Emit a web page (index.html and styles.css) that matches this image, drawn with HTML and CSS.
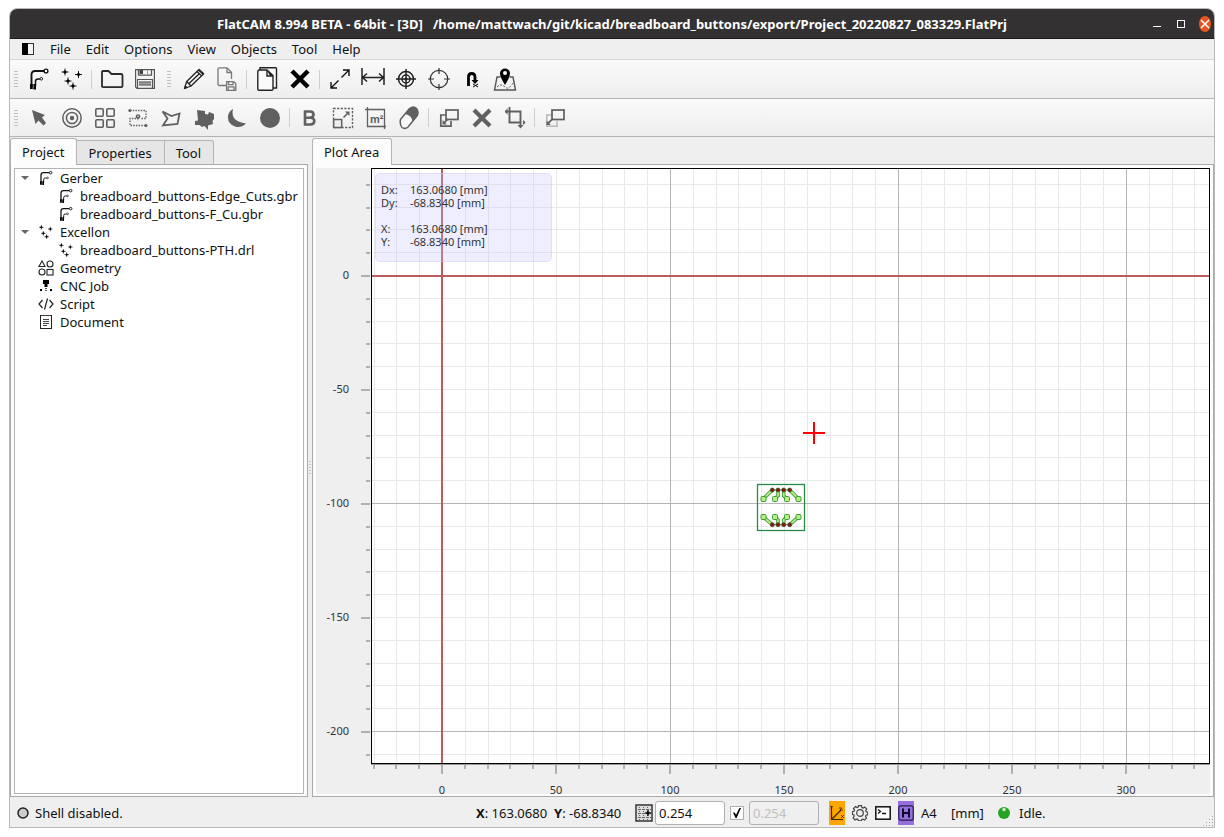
FILE: index.html
```html
<!DOCTYPE html>
<html lang="en">
<head>
<meta charset="utf-8">
<title>FlatCAM 8.994 BETA</title>
<link rel="stylesheet" href="styles.css">
</head>
<body>
<svg class="defs" aria-hidden="true">
  <symbol id="i-gerber" viewBox="0 0 24 24">
    <path d="M4.500 19V7.500Q4.500 4 8 4H17" fill="none" stroke="#111" stroke-width="1.900"/>
    <path d="M8.500 19V14.500Q8.500 12 11 12H13" fill="none" stroke="#111" stroke-width="1.500"/>
    <circle cx="19" cy="4" r="1.900" fill="#fff" stroke="#111" stroke-width="1.400"/>
    <circle cx="14.300" cy="11.800" r="1.300" fill="#fff" stroke="#111"/>
    <path d="M3 17h2.800v5H3zM6.400 17h2.600v5.500H6.400z" fill="#000"/>
  </symbol>
  <symbol id="i-drill" viewBox="0 0 24 24">
    <path d="M5 1.500v7M1.500 5h7M18.500 4v7M15 7.500h7M8 10.500v7M4.500 14h7M13 15.500v7M9.500 19h7" stroke="#222" fill="none"/>
    <path d="M5 3l2 2-2 2-2-2zM18.500 5.500l2 2-2 2-2-2zM8 12l2 2-2 2-2-2zM13 17l2 2-2 2-2-2z" fill="#000"/>
  </symbol>
</svg>

<div class="window">
  <header class="titlebar">
    <h1 class="title">FlatCAM 8.994 BETA - 64bit - [3D] &nbsp; /home/mattwach/git/kicad/breadboard_buttons/export/Project_20220827_083329.FlatPrj</h1>
    <div class="window-buttons">
      <button class="wbtn" aria-label="Minimize"><svg width="12" height="12"><path d="M2 8.500h8" stroke="#fff" fill="none"/></svg></button>
      <button class="wbtn" aria-label="Maximize"><svg width="12" height="12"><rect x="2.500" y="2.500" width="7" height="7" stroke="#fff" fill="none"/></svg></button>
      <button class="wbtn" aria-label="Close"><svg width="12" height="16"><ellipse cx="6" cy="8" rx="6" ry="8" fill="#e95420"/><path d="M2 4l8 8M10 4l-8 8" stroke="#fff" stroke-width="1.500"/></svg></button>
    </div>
  </header>

  <nav class="menubar" aria-label="Main menu">
    <button class="menu menu-toggle" aria-label="Toggle panel"><svg width="12" height="12"><rect x=".5" y=".5" width="11" height="11" fill="#f4f4f4" stroke="#333"/><rect width="6" height="12" fill="#000"/></svg></button>
    <button class="menu">File</button>
    <button class="menu">Edit</button>
    <button class="menu">Options</button>
    <button class="menu">View</button>
    <button class="menu">Objects</button>
    <button class="menu">Tool</button>
    <button class="menu">Help</button>
  </nav>

  <div class="toolbar toolbar-main" role="toolbar" aria-label="File and view">
    <span class="grip"></span>
    <button class="tool" aria-label="Open Gerber"><svg class="icon"><use href="#i-gerber"/></svg></button>
    <button class="tool" aria-label="Open Excellon"><svg class="icon"><use href="#i-drill"/></svg></button>
    <span class="sep"></span>
    <button class="tool" aria-label="Open project"><svg class="icon" viewBox="0 0 24 24"><path d="M2 20V5q0-1 1-1h5.500l3 3H21q1.500 0 1.500 1.500V19q0 1.200-1.200 1.200H3.200Q2 20.200 2 19z" fill="none" stroke="#2a2a2a" stroke-width="1.800"/></svg></button>
    <button class="tool" aria-label="Save project"><svg class="icon" viewBox="0 0 24 24"><g fill="none" stroke="#555" stroke-width="1.200"><path d="M2.600 2.600h18.800v18.800H4l-1.400-1.400z"/><path d="M5.500 2.600v5.500h13V2.600M4.500 21v-8.500h15V21"/></g><path d="M6 14.500h12v4H6z" fill="#999"/><path d="M6 15h12M6 18h12" stroke="#666"/><path d="M6.500 3h3.500v4H6.500z" fill="#444"/><path d="M14.500 3.500v3.500" stroke="#999"/></svg></button>
    <span class="grip"></span>
    <button class="tool" aria-label="Edit object"><svg class="icon" viewBox="0 0 24 24"><g fill="none" stroke="#222" stroke-width="1.300" stroke-linejoin="round"><path d="M2.500 21.500l2.200-7L17 2.500l4.700 4.200L9 19z"/><path d="M4.700 14.500L9 19M15 4.500l4.700 4.400M7 16.500L17.500 6.500"/></g><path d="M2 22l1.200-4 2.800 2.800zM17 2.500l4.700 4.200-1 1L16 3.500z" fill="#222"/></svg></button>
    <button class="tool" aria-label="Save object"><svg class="icon" viewBox="0 0 24 24"><g fill="none" stroke="#777" stroke-width="1.300"><path d="M11 18.500H4.500Q3 18.500 3 17V2q0-1.200 1.200-1.200H12l4.500 4.500V12"/><path d="M12 1v4.500h4.500M11.600 14.600h7l2.200 2v6.800h-9.200z"/><path d="M13.500 14.600v3h4.500v-3M13.200 23v-3.200h5.800V23"/></g></svg></button>
    <span class="sep"></span>
    <button class="tool" aria-label="Copy"><svg class="icon" viewBox="0 0 24 24"><g fill="#fafafa" stroke="#222" stroke-width="1.400"><path d="M5 3V.8h15.500q1 0 1 1V21H18z"/><path d="M2.800 4.500Q2.800 3 4.300 3H12l6 5.500V22q0 1.200-1.200 1.200H4Q2.800 23.200 2.800 22z"/><path d="M12 3v6h6" fill="none"/></g><path d="M12 3l6 6h-3z" fill="#222"/></svg></button>
    <button class="tool" aria-label="Delete"><svg class="icon" viewBox="0 0 24 24"><path d="M4 4l16 16M20 4L4 20" stroke="#000" stroke-width="4.500"/></svg></button>
    <span class="sep"></span>
    <button class="tool" aria-label="Zoom fit"><svg class="icon" viewBox="0 0 24 24"><g fill="none" stroke="#111" stroke-width="1.400"><path d="M13.500 10.500l7.500-7.500M15 3h6v6M10.500 13.500L3 21M3 15v6h6"/></g></svg></button>
    <button class="tool" aria-label="Distance"><svg class="icon" viewBox="0 0 24 24"><path d="M1 1v17M23 1v17M2 10.500h20M6 6.500l-4.500 4 4.500 4M18 6.500l4.500 4-4.500 4" fill="none" stroke="#222" stroke-width="1.500"/></svg></button>
    <button class="tool" aria-label="Minimum distance"><svg class="icon" viewBox="0 0 24 24"><g fill="none" stroke="#222" stroke-width="1.500"><circle cx="12" cy="12" r="7.500"/><circle cx="12" cy="12" r="4"/><path d="M12 2v20M2 12h20"/></g><circle cx="12" cy="12" r="1.600" fill="#222"/></svg></button>
    <button class="tool" aria-label="Set origin"><svg class="icon" viewBox="0 0 24 24"><g fill="none" stroke="#333" stroke-width="1.200"><circle cx="12" cy="12" r="8.700"/><path d="M12 1v6M12 17v6M1 12h6M17 12h6"/></g></svg></button>
    <button class="tool" aria-label="Move to origin"><svg class="icon" viewBox="0 0 24 24"><path d="M8.500 19V10q0-3.500 3.200-3.500T15 10v5" fill="none" stroke="#000" stroke-width="2.800"/><path d="M11.500 13h7L15 17z" fill="#000"/><path d="M13 17l5 3M18 17l-5 3" stroke="#000"/></svg></button>
    <button class="tool" aria-label="Jump to location"><svg class="icon" viewBox="0 0 24 24"><path d="M7.500 10H4L1.500 23h21L20 10h-3.500" fill="none" stroke="#555" stroke-width="1.400"/><path d="M4 20q4-4 8 0t9-6" fill="none" stroke="#555" stroke-dasharray="2 1.500"/><path d="M12 18Q7 10 7 6.500a5 5 0 0 1 10 0Q17 10 12 18z" fill="#000"/><circle cx="12" cy="6" r="2" fill="#fff"/></svg></button>
  </div>

  <div class="toolbar" role="toolbar" aria-label="Gerber editor">
    <span class="grip"></span>
    <button class="tool" aria-label="Select"><svg class="icon" viewBox="0 0 24 24"><path d="M5 4l13 5-3 2.500L19 17l-2.500 2.500-5-5L8.500 18z" fill="#606060"/></svg></button>
    <button class="tool" aria-label="Add pad"><svg class="icon" viewBox="0 0 24 24"><g fill="none" stroke="#606060" stroke-width="1.500"><circle cx="12" cy="12" r="9.200"/><circle cx="12" cy="12" r="5.600"/></g><circle cx="12" cy="12" r="2.200" fill="#606060"/></svg></button>
    <button class="tool" aria-label="Pad array"><svg class="icon" viewBox="0 0 24 24"><g fill="none" stroke="#606060" stroke-width="1.600"><rect x="2.800" y="2.800" width="7.400" height="7.400" rx="1"/><rect x="13.800" y="2.800" width="7.400" height="7.400" rx="1"/><rect x="2.800" y="13.800" width="7.400" height="7.400" rx="1"/><rect x="13.800" y="13.800" width="7.400" height="7.400" rx="1"/></g></svg></button>
    <button class="tool" aria-label="Add track"><svg class="icon" viewBox="0 0 24 24"><path d="M4 4.500h16v8h-5M10 12.500H4v7h16" fill="none" stroke="#606060" stroke-width="1.300" stroke-dasharray="1.500 1.200"/><circle cx="3.800" cy="4.500" r="1.500" fill="#606060"/><circle cx="20" cy="19.500" r="1.500" fill="#606060"/><circle cx="12" cy="10.500" r="2.300" fill="#606060"/><circle cx="12" cy="10.300" r=".8" fill="#eee"/><path d="M11 11h2l-1 4z" fill="#606060"/></svg></button>
    <button class="tool" aria-label="Add region"><svg class="icon" viewBox="0 0 24 24"><path d="M3.500 5.500l9 4.500 8-2.500-2 10.500-14.500 1.500 4.500-7z" fill="none" stroke="#606060" stroke-width="1.800"/></svg></button>
    <button class="tool" aria-label="Poligonize"><svg class="icon" viewBox="0 0 24 24"><path d="M5 4l8 1v3l3 .5L17 6l5 2v5l-1.500 2 .5 3-5 1.500V24l-3.500-4-2.500 1-2.500-2H3v-4l3-.5z" fill="#606060"/></svg></button>
    <button class="tool" aria-label="Semidisc"><svg class="icon" viewBox="0 0 24 24"><path d="M8 3Q5 15.500 21 17.500 16 22.500 10 20.500 3 18 3 11.500 3 5.500 8 3z" fill="#606060"/></svg></button>
    <button class="tool" aria-label="Disc"><svg class="icon" viewBox="0 0 24 24"><circle cx="12" cy="12" r="10" fill="#606060"/></svg></button>
    <span class="sep"></span>
    <button class="tool" aria-label="Buffer"><svg class="icon" viewBox="0 0 24 24"><path d="M7 5.500h5q3.500 0 3.500 3t-3.500 3.200H7zM7 11.700h5.500q3.800 0 3.800 3.400t-3.800 3.400H7z" fill="none" stroke="#606060" stroke-width="2.600"/></svg></button>
    <button class="tool" aria-label="Scale"><svg class="icon" viewBox="0 0 24 24"><rect x="2.500" y="2.500" width="19" height="19" fill="none" stroke="#606060" stroke-width="1.400" stroke-dasharray="2.200 1.400"/><rect x="2.700" y="13.500" width="8" height="8" fill="#eee" stroke="#606060" stroke-width="1.500"/><path d="M12.500 11.500L17 7" stroke="#606060" stroke-width="1.600"/><path d="M14 5.500h4.500V10z" fill="#606060"/></svg></button>
    <button class="tool" aria-label="Mark area"><svg class="icon" viewBox="0 0 24 24"><path d="M3.500 1v19.500H22M1 3.500h19.500V23" fill="none" stroke="#606060" stroke-width="1.300"/><text x="6" y="17" class="area-m">m²</text></svg></button>
    <button class="tool" aria-label="Eraser"><svg class="icon" viewBox="0 0 24 24"><path d="M3.500 13.500L12.500 2.500q4-3 7 0 2.500 3 .8 7L11 21q-3 2.500-6 .5-2.500-3-1.500-8z" fill="#fafafa" stroke="#606060" stroke-width="1.500"/><path d="M8 8l4.500-5.500q4-3 7 0 2.500 3 .8 7L15.500 16Q15 9 8 8z" fill="#606060"/></svg></button>
    <span class="sep"></span>
    <button class="tool" aria-label="Copy shape"><svg class="icon" viewBox="0 0 24 24"><g fill="none" stroke="#606060" stroke-width="1.700"><path d="M9 9H3.800v11.200H14V15"/><rect x="9" y="4" width="12" height="9.500"/></g><path d="M5.500 18.500V14l1.500 1.500 3.500-3 1 1-3.200 3.500 1.700 1.500z" fill="#606060"/></svg></button>
    <button class="tool" aria-label="Delete shape"><svg class="icon" viewBox="0 0 24 24"><path d="M4 4l16 16M20 4L4 20" stroke="#606060" stroke-width="4.200"/></svg></button>
    <button class="tool" aria-label="Transformations"><svg class="icon" viewBox="0 0 24 24"><path d="M6.500 2v14.500h12M2 5.500h15.500v15M6.500 1v3M20 16.500h2" fill="none" stroke="#606060" stroke-width="1.900"/><path d="M4.500 2L2 5.500 4.500 9zM14.500 19h6l-3 3.500zM20 14v5l2.500-2.500z" fill="#606060"/></svg></button>
    <span class="sep"></span>
    <button class="tool" aria-label="Move shape"><svg class="icon" viewBox="0 0 24 24"><path d="M9 9H3.800v11.200H14V15" fill="none" stroke="#b8b8b8" stroke-width="1.500"/><rect x="9" y="4" width="12" height="9.500" fill="none" stroke="#606060" stroke-width="1.700"/><path d="M3.500 19v-4.500l1.500 1.500 4.500-4 1 1-4.200 4.500 1.500 1.500z" fill="#606060"/></svg></button>
  </div>

  <main class="workspace">
    <section class="side">
      <div class="tabs" role="tablist">
        <button class="tab active" role="tab" aria-selected="true">Project</button>
        <button class="tab" role="tab" aria-selected="false">Properties</button>
        <button class="tab" role="tab" aria-selected="false">Tool</button>
      </div>
      <div class="pane side-pane">
        <ul class="tree">
          <li class="row"><span class="arrow"></span><svg class="mini"><use href="#i-gerber"/></svg>Gerber</li>
          <li class="row child"><svg class="mini"><use href="#i-gerber"/></svg>breadboard_buttons-Edge_Cuts.gbr</li>
          <li class="row child"><svg class="mini"><use href="#i-gerber"/></svg>breadboard_buttons-F_Cu.gbr</li>
          <li class="row"><span class="arrow"></span><svg class="mini"><use href="#i-drill"/></svg>Excellon</li>
          <li class="row child"><svg class="mini"><use href="#i-drill"/></svg>breadboard_buttons-PTH.drl</li>
          <li class="row"><svg class="mini" viewBox="0 0 16 16"><g fill="none" stroke="#222" stroke-width="1.100"><path d="M4 1L1 6.500h6z"/><circle cx="12" cy="4" r="3"/><circle cx="4" cy="12" r="3"/><rect x="9" y="9.500" width="6" height="5.500"/></g></svg>Geometry</li>
          <li class="row"><svg class="mini" viewBox="0 0 16 16"><path d="M5 2h6v4H9.500v3h-3V6H5zM2 11h2v2H2zM12 11h2v2h-2zM7.300 10h1.400v1H7.300zM7.300 12h1.400v1H7.300z" fill="#000"/></svg>CNC Job</li>
          <li class="row"><svg class="mini" viewBox="0 0 16 16"><path d="M4.500 4L1 8l3.500 4M11.500 4L15 8l-3.500 4M9.500 2.500l-3 11" fill="none" stroke="#222" stroke-width="1.200"/></svg>Script</li>
          <li class="row"><svg class="mini" viewBox="0 0 16 16"><rect x="2.500" y="1.500" width="11" height="13" fill="none" stroke="#222"/><path d="M4 1.500h8M5 5.500h6M5 7.500h6M5 9.500h6M5 11.500h4" stroke="#444" fill="none"/></svg>Document</li>
        </ul>
      </div>
    </section>

    <div class="splitter"></div>

    <section class="main">
      <div class="tabs" role="tablist">
        <button class="tab active" role="tab" aria-selected="true">Plot Area</button>
      </div>
      <div class="pane plot-pane">
        <div class="plot-grid">
          <svg class="axis-y" aria-label="Y axis">
            <defs><pattern id="ty" x="0" y="107" width="55" height="114" patternUnits="userSpaceOnUse"><path d="M45 0h9v2h-9zM50 23h4v2h-4zM50 46h4v2h-4zM50 68h4v2h-4zM50 91h4v2h-4z" fill="#b0b0b0"/></pattern></defs>
            <rect width="55" height="100%" fill="url(#ty)"/>
            <g class="ticks-y"><text x="33" y="111">0</text><text x="33" y="225">-50</text><text x="33" y="339">-100</text><text x="33" y="453">-150</text><text x="33" y="567">-200</text></g>
          </svg>
          <div class="plot">
            <svg class="plot-svg" aria-label="PCB plot">
              <defs>
                <pattern id="minor" x="70" y="106" width="114" height="114" patternUnits="userSpaceOnUse"><path d="M.5 0v114M23.500 0v114M46.500 0v114M68.500 0v114M91.500 0v114M0 .5h114M0 23.500h114M0 46.500h114M0 68.500h114M0 91.500h114" stroke="#e9e9e9" fill="none"/></pattern>
                <pattern id="major" x="70" y="106" width="228" height="228" patternUnits="userSpaceOnUse"><path d="M.5 0v228M0 .5h228" stroke="#b4b4b4" fill="none"/></pattern>
              </defs>
              <rect width="100%" height="100%" fill="url(#minor)"/>
              <rect width="100%" height="100%" fill="url(#major)"/>
              <rect x="69" width="2" height="100%" fill="#b85c5c"/>
              <rect y="106" width="100%" height="2" fill="#b85c5c"/>
              <rect x="385.500" y="315.500" width="47" height="46" fill="none" stroke="#2a8a4c" stroke-width="1.300"/>
              <g fill="none" stroke="#3c9c3c" stroke-width="3.600"><path d="M391.300 329.700l9-8.700M403 329.700l3-3V321M414.700 329.700l-3-3V321M426.300 329.700l-8.600-8.700M391.300 348l9 7.700M403 348l3 3v4.700M414.700 348l-3 3v4.700M426.300 348l-8.600 7.700"/></g>
              <path d="M400.300 321h17.400M400.300 355.700h17.400" stroke="#3c9c3c"/>
              <g fill="none" stroke="#b8ec80" stroke-width="1.800"><path d="M391.300 329.700l9-8.700M403 329.700l3-3V321M414.700 329.700l-3-3V321M426.300 329.700l-8.600-8.700M391.300 348l9 7.700M403 348l3 3v4.700M414.700 348l-3 3v4.700M426.300 348l-8.600 7.700"/></g>
              <g fill="#b8f080" stroke="#3c9c3c"><rect x="389" y="327.500" width="5" height="5" rx="1"/><rect x="400.500" y="327.500" width="5" height="5" rx="1"/><rect x="412.500" y="327.500" width="5" height="5" rx="1"/><rect x="424" y="327.500" width="5" height="5" rx="1"/><rect x="389" y="345.500" width="5" height="5" rx="1"/><rect x="400.500" y="345.500" width="5" height="5" rx="1"/><rect x="412.500" y="345.500" width="5" height="5" rx="1"/><rect x="424" y="345.500" width="5" height="5" rx="1"/></g>
              <g fill="#8c1010" stroke="#3a5c2c" stroke-width=".8"><circle cx="400.300" cy="321" r="2"/><circle cx="406" cy="321" r="2"/><circle cx="411.700" cy="321" r="2"/><circle cx="417.700" cy="321" r="2"/><circle cx="400.300" cy="355.700" r="2"/><circle cx="406" cy="355.700" r="2"/><circle cx="411.700" cy="355.700" r="2"/><circle cx="417.700" cy="355.700" r="2"/></g>
              <path d="M442 253v22M431 264h22" stroke="#f00" stroke-width="2"/>
            </svg>
            <dl class="hud">
              <dt>Dx:</dt><dd>163.0680 [mm]</dd>
              <dt>Dy:</dt><dd>-68.8340 [mm]</dd>
              <dt class="hud-abs">X:</dt><dd class="hud-abs">163.0680 [mm]</dd>
              <dt>Y:</dt><dd>-68.8340 [mm]</dd>
            </dl>
          </div>
          <svg class="axis-x" aria-label="X axis">
            <defs><pattern id="tx" x="70" y="0" width="114" height="30" patternUnits="userSpaceOnUse"><path d="M0 1h2v9H0zM23 1h2v4h-2zM46 1h2v4h-2zM68 1h2v4h-2zM91 1h2v4h-2z" fill="#b0b0b0"/></pattern></defs>
            <rect width="100%" height="30" fill="url(#tx)"/>
            <rect width="100%" height="1" fill="#999"/>
            <g class="ticks-x"><text x="71" y="30">0</text><text x="185" y="30">50</text><text x="299" y="30">100</text><text x="413" y="30">150</text><text x="527" y="30">200</text><text x="641" y="30">250</text><text x="755" y="30">300</text></g>
          </svg>
        </div>
      </div>
    </section>
  </main>

  <footer class="statusbar">
    <svg class="shell-dot" width="12" height="12"><circle cx="6" cy="6" r="5" fill="#ccc" stroke="#222" stroke-width="1.500"/></svg>
    <span>Shell disabled.</span>
    <div class="status-tools">
      <span class="coord"><b>X</b>: 163.0680</span>
      <span class="coord"><b>Y</b>: -68.8340</span>
      <button class="snap" aria-label="Snap to grid"><svg width="18" height="18"><rect x="1" y="1" width="16" height="16" fill="#ddd" stroke="#222" stroke-width="1.300"/><path d="M4.500 1v16M8.500 1v16M12.500 1v16M1 5.500h16M1 9.500h16M1 13.500h16" stroke="#666" stroke-dasharray="1 1"/><path d="M13 6l.7 2.300 2.300.7-2.300.7L13 12l-.7-2.300L10 9l2.300-.7z" fill="#000" stroke="#000" stroke-width=".6"/></svg></button>
      <input class="num" type="text" value="0.254" aria-label="Grid X">
      <input class="check" type="checkbox" checked aria-label="Link grid values">
      <input class="num" type="text" value="0.254" disabled aria-label="Grid Y">
      <button class="chip axis" aria-label="Toggle axis"><svg width="16" height="24"><path d="M2.500 5v13.500H14M3 18L12 9" fill="none" stroke="#3a2600" stroke-width="1.200"/><path d="M1 5l3 1M3 5L2 8M10 7h3l-2 2h3M12 14l3 3M15 14l-3 3" stroke="#3a2600" fill="none" stroke-width=".8"/></svg></button>
      <button class="chip" aria-label="Preferences"><svg width="16" height="16" viewBox="0 0 16 16"><path d="M6.500.7h3l.4 1.800 1.200.5 1.600-1 2 2-1 1.700.5 1.100 1.400.4v2.600l-1.600.5-.5 1.200 1 1.600-2 2-1.600-1-1.200.5-.4 1.300h-3l-.4-1.500-1.200-.5-1.600 1-2-2 1-1.600L2 9.900.4 9.500V6.600L2 6.300l.5-1.200-1-1.600 2-2 1.700 1 1-.4z" fill="none" stroke="#444" stroke-width="1.200"/><circle cx="8" cy="8" r="3.300" fill="none" stroke="#444" stroke-width="1.200"/></svg></button>
      <button class="chip" aria-label="Command line"><svg width="16" height="14"><rect x=".8" y=".8" width="14.400" height="12.400" fill="#fafafa" stroke="#111" stroke-width="1.500"/><path d="M3 3.500l2.500 2L3 7.500M7 7.500h4" fill="none" stroke="#111" stroke-width="1.300"/></svg></button>
      <button class="chip hud-toggle" aria-label="Toggle HUD"><svg width="16" height="16"><rect x=".8" y=".8" width="14.400" height="14.400" rx="2" fill="none" stroke="#2a1a50" stroke-width="1.200"/><path d="M5 3.500v9M11 3.500v9M5 8h6" stroke="#100828" stroke-width="2" fill="none"/></svg></button>
      <span class="paper">A4</span>
      <span class="units">[mm]</span>
      <svg class="led" width="12" height="12"><circle cx="6" cy="6" r="6" fill="#25a325"/><circle cx="6" cy="2.500" r="1.700" fill="#d8f4d8"/></svg>
      <span class="state">Idle.</span>
    </div>
    <span class="resize"></span>
  </footer>
</div>
</body>
</html>
```
FILE: styles.css
```css
* { box-sizing: border-box; }

body {
  margin: 0;
  padding: 8px 9px 9px;
  height: 100vh;
  background: #fff;
  color: #111;
  font: 13px/18px "Noto Sans", "Open Sans", sans-serif;
}

button {
  margin: 0;
  padding: 0;
  border: 0;
  background: none;
  color: inherit;
  font: inherit;
}

.defs { position: absolute; width: 0; height: 0; }

.window {
  display: flex;
  flex-direction: column;
  height: 100%;
  border: 1px solid #b8b8b8;
  border-radius: 8px 8px 0 0;
  background: #efefef;
  overflow: hidden;
}

/* Title and menu */
.titlebar {
  display: flex;
  align-items: center;
  justify-content: center;
  position: relative;
  flex: none;
  height: 30px;
  background: #333132;
  border-bottom: 1px solid #1c1b1b;
}
.title { margin: 0; font-size: 13px; line-height: 18px; font-weight: 700; color: #fff; white-space: nowrap; }
.window-buttons { position: absolute; right: 3px; display: flex; align-items: center; gap: 12px; }
.wbtn { display: flex; }

.menubar {
  display: flex;
  align-items: center;
  flex: none;
  gap: 15px;
  height: 21px;
  padding-left: 12px;
  border-bottom: 1px solid #d4d4d4;
}
.menu-toggle { display: flex; margin-right: 1px; }

/* Toolbars */
.toolbar {
  display: flex;
  align-items: center;
  flex: none;
  height: 38px;
  background: linear-gradient(#fafafa, #eee);
  border-bottom: 1px solid #b4b4b4;
}
.toolbar-main { height: 39px; }
.tool { display: flex; justify-content: center; width: 33px; }
.icon { display: block; width: 24px; height: 24px; }
.area-m { font: 700 11px "Liberation Sans", sans-serif; fill: #606060; }
.sep { width: 1px; height: 19px; margin: 0 3px; background: #cfcfcf; }
.grip {
  width: 4px;
  height: 18px;
  margin: 0 4px;
  background: radial-gradient(circle, #c0c0c0 30%, transparent 45%) 0 0 / 2px 3px;
}
.tool + .grip { margin: 0 6px; }

/* Workspace */
.workspace {
  display: grid;
  grid-template-columns: minmax(200px, 298px) 4px minmax(0, 1fr);
  flex: 1;
  min-height: 0;
  padding-top: 1px;
}
.side, .main { display: flex; flex-direction: column; min-width: 0; min-height: 0; }
.tabs { display: flex; align-items: flex-end; flex: none; height: 26px; }
.tab {
  height: 24px;
  padding: 0 12px 0 11px;
  border: 1px solid #b4b4b4;
  border-left: 0;
  border-bottom: 0;
  background: #e6e6e6;
}
.tab:last-child { border-top-right-radius: 3px; }
.tab.active {
  position: relative;
  height: 27px;
  margin-bottom: -1px;
  border-left: 1px solid #b4b4b4;
  border-radius: 3px 3px 0 0;
  background: #fcfcfc;
}
.pane { flex: 1; min-height: 0; border: 1px solid #aaa; background: #fcfcfc; }
.side-pane { padding: 3px 3px 2px; }
.splitter {
  align-self: center;
  width: 2px;
  height: 14px;
  margin-left: 1px;
  background: repeating-linear-gradient(#c4c4c4 0 1px, transparent 1px 3px);
}

.tree {
  height: 100%;
  margin: 0;
  padding: 0;
  border: 1px solid #b4b4b4;
  background: #fff;
  list-style: none;
  overflow: hidden;
}
.row {
  display: flex;
  align-items: center;
  gap: 6px;
  position: relative;
  height: 18px;
  padding-left: 23px;
  white-space: nowrap;
}
.child { padding-left: 43px; }
.mini { flex: none; width: 16px; height: 16px; }
.arrow {
  position: absolute;
  left: 6px;
  border: 4px solid transparent;
  border-top-color: #666;
  border-bottom: 0;
}

/* Plot */
.plot-pane { padding: 3px 3px 2px; overflow: hidden; }
.plot-grid {
  display: grid;
  grid-template: minmax(0, 1fr) 30px / 55px minmax(0, 1fr);
  height: 100%;
  background: #efefef;
}
.axis-y, .axis-x { display: block; width: 100%; height: 100%; overflow: hidden; }
.axis-x { grid-column: 2; overflow: visible; }
.ticks-y, .ticks-x { font: 11px "Noto Sans", sans-serif; fill: #333; text-anchor: end; }
.ticks-x { text-anchor: middle; }
.plot { position: relative; border: 1px solid #000; background: #fff; }
.plot-svg { position: absolute; inset: 0; width: 100%; height: 100%; }
.hud {
  position: absolute;
  left: 3px;
  top: 4px;
  display: grid;
  grid-template-columns: 29px auto;
  width: 177px;
  height: 89px;
  margin: 0;
  padding: 9px 5px;
  align-content: start;
  border: 1px solid rgba(200, 200, 250, .4);
  border-radius: 5px;
  background: rgba(200, 200, 255, .3);
  color: #333;
  font-size: 11px;
  line-height: 13px;
}
.hud dd { margin: 0; }
.hud .hud-abs { margin-top: 13px; }

/* Status bar */
.statusbar {
  display: flex;
  align-items: center;
  position: relative;
  flex: none;
  height: 30px;
  padding: 2px 0 0 7px;
  white-space: nowrap;
}
.shell-dot { margin-right: 6px; }
.status-tools { display: flex; align-items: center; margin-left: auto; }
.coord { width: 78px; }
.snap { display: flex; margin-left: 3px; margin-right: 2px; background: #d6d6d6; }
.num {
  width: 70px;
  height: 24px;
  padding: 0 3px;
  border: 1px solid #b0b0b0;
  border-radius: 3px;
  background: #fff;
  color: #111;
  font: inherit;
}
.num:disabled { background: #efefef; color: #bebebe; }
.check {
  appearance: none;
  display: grid;
  place-items: center;
  width: 14px;
  height: 14px;
  margin: 0 5px;
  border: 1px solid #b0b0b0;
  background: #fff;
}
.check:checked::before {
  content: "";
  width: 8px;
  height: 10px;
  background: #000;
  clip-path: polygon(0 45%, 20% 45%, 38% 68%, 80% 0, 100% 0, 45% 100%, 32% 100%);
}
.chip { display: flex; align-items: center; justify-content: center; width: 16px; height: 24px; margin-right: 7px; }
.axis { margin-left: 10px; background: #ffa500; }
.hud-toggle { background: #9370db; }
.paper { width: 30px; }
.units { width: 47px; }
.led { margin-right: 9px; }
.state { width: 195px; }
.resize {
  position: absolute;
  right: 1px;
  bottom: 1px;
  width: 11px;
  height: 11px;
  background: radial-gradient(circle, #aaa 30%, transparent 40%) 0 0 / 3px 3px;
  clip-path: polygon(100% 0, 100% 100%, 0 100%);
}
```
